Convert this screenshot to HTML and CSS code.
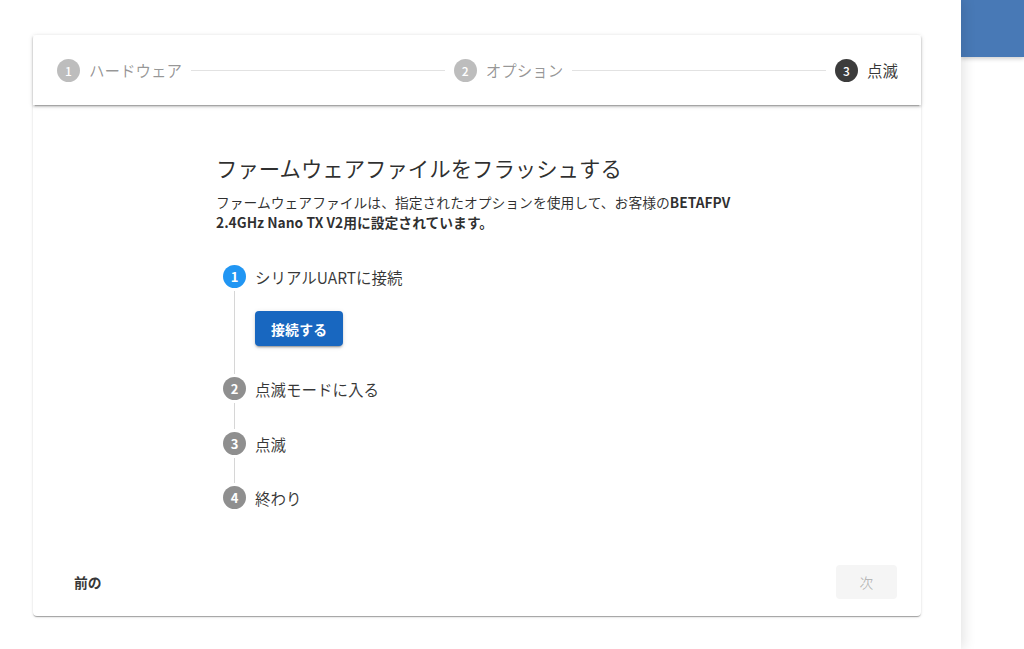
FILE: index.html
```html
<!DOCTYPE html>
<html lang="ja">
<head>
<meta charset="utf-8">
<title>ファームウェアのフラッシュ</title>
<link rel="stylesheet" href="styles.css">
</head>
<body>
<div class="layout">
  <main class="page">
    <section class="card">
      <header class="stepper-head">
        <div class="hstep">
          <span class="dot dot-muted">1</span>
          <span class="hstep-label muted">ハードウェア</span>
        </div>
        <div class="hdivider"></div>
        <div class="hstep">
          <span class="dot dot-muted">2</span>
          <span class="hstep-label muted">オプション</span>
        </div>
        <div class="hdivider"></div>
        <div class="hstep">
          <span class="dot dot-dark">3</span>
          <span class="hstep-label">点滅</span>
        </div>
      </header>

      <div class="card-body">
        <div class="flash">
          <h1 class="flash-title">ファームウェアファイルをフラッシュする</h1>
          <p class="flash-desc">ファームウェアファイルは、指定されたオプションを使用して、お客様の<b>BETAFPV 2.4GHz Nano TX V2用に設定されています。</b></p>

          <ol class="vsteps">
            <li class="vstep">
              <div class="vstep-head">
                <span class="dot dot-active">1</span>
                <span class="vstep-label">シリアルUARTに接続</span>
              </div>
              <div class="vstep-body">
                <div class="rail"><span class="rail-line"></span></div>
                <div class="vstep-content">
                  <button class="btn-primary" type="button">接続する</button>
                </div>
              </div>
            </li>
            <li class="vstep">
              <div class="vstep-head">
                <span class="dot dot-grey">2</span>
                <span class="vstep-label">点滅モードに入る</span>
              </div>
              <div class="vstep-body">
                <div class="rail"><span class="rail-line"></span></div>
                <div class="vstep-content spacer"></div>
              </div>
            </li>
            <li class="vstep">
              <div class="vstep-head">
                <span class="dot dot-grey">3</span>
                <span class="vstep-label">点滅</span>
              </div>
              <div class="vstep-body">
                <div class="rail"><span class="rail-line"></span></div>
                <div class="vstep-content spacer"></div>
              </div>
            </li>
            <li class="vstep">
              <div class="vstep-head">
                <span class="dot dot-grey">4</span>
                <span class="vstep-label">終わり</span>
              </div>
            </li>
          </ol>
        </div>
      </div>

      <footer class="card-actions">
        <button class="btn-text" type="button">前の</button>
        <button class="btn-disabled" type="button" disabled>次</button>
      </footer>
    </section>
  </main>
  <aside class="side">
    <div class="side-bar"></div>
  </aside>
</div>
</body>
</html>
```

FILE: styles.css
```css
* {
  box-sizing: border-box;
}

html, body {
  margin: 0;
  height: 100%;
  background: #ffffff;
  font-family: "Noto Sans CJK JP", "Noto Sans", sans-serif;
  color: rgba(0, 0, 0, 0.82);
}

.layout {
  display: flex;
  height: 649px;
  overflow: hidden;
}

/* main white sheet with its shadow cast onto the side column */
.page {
  flex: 0 0 961px;
  background: #ffffff;
  padding: 35px 0 0 33px;
  position: relative;
  z-index: 2;
  box-shadow: 3px 0 12px rgba(0, 0, 0, 0.11);
}

.side {
  flex: 1;
  background: #ffffff;
  position: relative;
  z-index: 1;
}

.side-bar {
  height: 57px;
  background: #4879b6;
  box-shadow: 0 2px 4px rgba(0, 0, 0, 0.18);
}

/* card */
.card {
  width: 888px;
  height: 581px;
  background: #fff;
  border-radius: 4px;
  box-shadow: 0 2px 1px -1px rgba(0, 0, 0, 0.2), 0 1px 1px 0 rgba(0, 0, 0, 0.14), 0 1px 3px 0 rgba(0, 0, 0, 0.12);
  display: flex;
  flex-direction: column;
}

/* horizontal stepper header */
.stepper-head {
  height: 70px;
  display: flex;
  align-items: center;
  padding: 0 23px 0 24px;
  box-shadow: 0 3px 1px -2px rgba(0, 0, 0, 0.2), 0 2px 2px 0 rgba(0, 0, 0, 0.14), 0 1px 5px 0 rgba(0, 0, 0, 0.12);
  position: relative;
  z-index: 1;
}

.hstep {
  display: flex;
  align-items: center;
  gap: 9px;
}

.hstep-label {
  font-size: 15.5px;
  line-height: 20px;
  color: rgba(0, 0, 0, 0.8);
}

.hstep-label.muted {
  color: rgba(0, 0, 0, 0.42);
}

.hdivider {
  flex: 1;
  height: 1px;
  background: #e2e2e2;
  margin: 0 9px;
}

.dot {
  flex: none;
  width: 23px;
  height: 23px;
  border-radius: 50%;
  color: #fff;
  font-size: 12px;
  line-height: 23px;
  text-align: center;
  font-weight: 500;
}

.dot-muted {
  background: #bdbdbd;
}

.dot-dark {
  background: #3c3c3c;
}

.dot-active {
  background: #2196f3;
  font-weight: 700;
  font-size: 13px;
}

.dot-grey {
  background: #8f8f8f;
  font-weight: 700;
  font-size: 13px;
}

/* content */
.card-body {
  flex: 1;
  padding: 47px 0 0 183px;
}

.flash {
  width: 540px;
}

.flash-title {
  margin: 0;
  font-size: 21.4px;
  line-height: 32px;
  font-weight: 400;
  color: rgba(0, 0, 0, 0.82);
}

.flash-desc {
  margin: 8px 0 0;
  font-size: 13.8px;
  line-height: 20px;
  color: rgba(0, 0, 0, 0.82);
}

.flash-desc b {
  font-weight: 700;
}

.vsteps {
  list-style: none;
  margin: 33px 0 0;
  padding: 0 0 0 7px;
}

.vstep-head {
  display: flex;
  align-items: center;
  gap: 9px;
  height: 23px;
}

.vstep-label {
  font-size: 15.5px;
  color: rgba(0, 0, 0, 0.78);
}

.vstep-body {
  display: flex;
}

.rail {
  flex: 0 0 23px;
  display: flex;
  justify-content: center;
  padding: 3px 0;
}

.rail-line {
  width: 1px;
  background: #d6d6d6;
}

.vstep-content {
  padding: 23px 0 31px 9px;
}

.vstep-content.spacer {
  padding: 0;
  height: 32px;
}

.vstep:nth-child(3) .vstep-content.spacer {
  height: 31px;
}

.btn-primary {
  height: 35px;
  padding: 0 16px;
  border: 0;
  border-radius: 4px;
  background: #1867c0;
  color: #fff;
  font-family: inherit;
  font-size: 13.8px;
  font-weight: 700;
  letter-spacing: 0.02em;
  box-shadow: 0 3px 1px -2px rgba(0, 0, 0, 0.2), 0 2px 2px 0 rgba(0, 0, 0, 0.14), 0 1px 5px 0 rgba(0, 0, 0, 0.12);
  display: block;
}

/* footer actions */
.card-actions {
  display: flex;
  align-items: center;
  justify-content: space-between;
  padding: 0 24px 17px 25px;
}

.btn-text {
  height: 34px;
  padding: 0 16px;
  border: 0;
  background: transparent;
  font-family: inherit;
  font-size: 13.8px;
  font-weight: 700;
  color: rgba(0, 0, 0, 0.8);
}

.btn-disabled {
  width: 61px;
  height: 34px;
  border: 0;
  border-radius: 4px;
  background: #f5f5f5;
  font-family: inherit;
  font-size: 13.8px;
  color: rgba(0, 0, 0, 0.26);
}
```
